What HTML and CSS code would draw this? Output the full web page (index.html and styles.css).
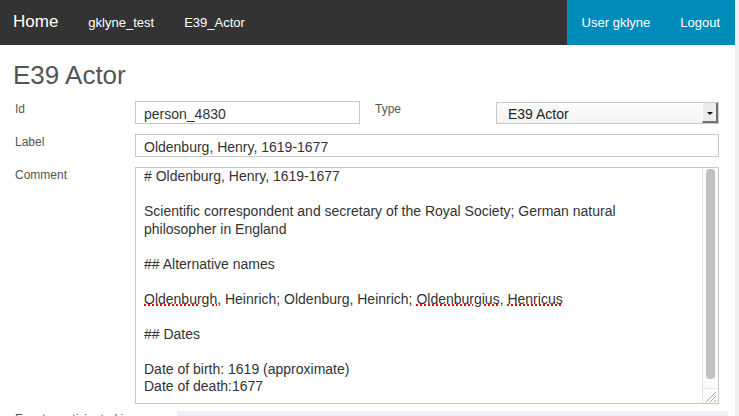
FILE: index.html
```html
<!DOCTYPE html>
<html lang="en">
<head>
<meta charset="utf-8">
<title>E39 Actor</title>
<link rel="stylesheet" href="styles.css">
</head>
<body>
<div class="page">
  <nav class="topbar">
    <a class="nav-link brand" href="#">Home</a>
    <a class="nav-link" href="#">gklyne_test</a>
    <a class="nav-link" href="#">E39_Actor</a>
    <div class="nav-right">
      <a class="nav-link" href="#">User gklyne</a>
      <a class="nav-link" href="#">Logout</a>
    </div>
  </nav>
  <main class="content">
    <h1 class="title">E39 Actor</h1>
    <form class="form">
      <div class="row">
        <label class="label" for="f-id">Id</label>
        <input class="input" id="f-id" type="text" value="person_4830">
        <label class="label label-type" for="f-type">Type</label>
        <div class="select">
          <select class="select-native" id="f-type"><option>E39 Actor</option></select>
          <span class="select-btn"><span class="select-arrow"></span></span>
        </div>
      </div>
      <div class="row">
        <label class="label" for="f-label">Label</label>
        <input class="input input-wide" id="f-label" type="text" value="Oldenburg, Henry, 1619-1677">
      </div>
      <div class="row row-comment">
        <label class="label">Comment</label>
        <div class="comment">
          <div class="comment-text"># Oldenburg, Henry, 1619-1677

Scientific correspondent and secretary of the Royal Society; German natural
philosopher in England

## Alternative names

<span class="misspelt">Oldenburgh</span>, Heinrich; Oldenburg, Heinrich; <span class="misspelt">Oldenburgius</span>, <span class="misspelt">Henricus</span>

## Dates

Date of birth: 1619 (approximate)
Date of death:1677</div>
          <div class="comment-bar">
            <div class="comment-track"><div class="comment-thumb"></div></div>
            <div class="comment-resizer">
              <svg width="14" height="14" viewBox="0 0 14 14" aria-hidden="true">
                <path d="M13 3 L3 13 M13 7 L7 13 M13 11 L11 13" stroke="#a8a8a8" stroke-width="1" fill="none"/>
              </svg>
            </div>
          </div>
        </div>
      </div>
      <div class="row-group">
        <label class="label label-group">Events participated in</label>
        <div class="group-box"></div>
      </div>
    </form>
  </main>
</div>
<div class="page-scroll"></div>
</body>
</html>
```

FILE: styles.css
```css
html, body {
  margin: 0;
  height: 100%;
  overflow: hidden;
}

body {
  display: flex;
  background: #fff;
  font-family: "Liberation Sans", Arial, Helvetica, sans-serif;
  color: #333;
}

.page {
  width: 735px;
  flex: none;
}

.page-scroll {
  width: 4px;
  flex: none;
  background: #efefef;
}

/* top bar */
.topbar {
  display: flex;
  height: 45px;
  background: #333;
}

.nav-link {
  display: block;
  padding: 1px 15px 0;
  font-size: 13px;
  line-height: 44px;
  color: #fff;
  text-decoration: none;
}

.brand {
  padding: 0 15px 0 13px;
  font-size: 17px;
  line-height: 44px;
}

.nav-right {
  display: flex;
  margin-left: auto;
  background: #008cba;
}

/* heading */
.title {
  margin: 0 0 10px;
  padding: 15px 0 0 13px;
  font-size: 26px;
  font-weight: normal;
  line-height: 31px;
  color: #555;
}

/* form */
.form {
  padding: 0 16px 0 15px;
}

.row {
  display: grid;
  grid-template-columns: 120px 225px 15px 121px 1fr;
  align-items: start;
  margin-bottom: 10px;
}

.row-comment {
  margin-bottom: 7px;
}

.label {
  font-size: 12px;
  line-height: 17px;
  color: #555;
}

.label-type {
  grid-column: 4;
}

.input {
  box-sizing: border-box;
  height: 23px;
  margin: 0;
  padding: 2px 8px 0;
  border: 1px solid #c9c9c9;
  border-radius: 0;
  background: #fff;
  font-family: "Liberation Sans", Arial, sans-serif;
  font-size: 14px;
  color: #333;
  outline: none;
}

.input-wide {
  grid-column: 2 / -1;
}

/* select */
.select {
  display: flex;
  box-sizing: border-box;
  height: 23px;
  margin-top: 1px;
  height: 22px;
  border: 1px solid #c9c9c9;
  background: linear-gradient(#fcfcfc, #f3f3f3);
}

.select-native {
  flex: 1;
  min-width: 0;
  margin: 0;
  padding: 1px 0 0 11px;
  border: 0;
  background: transparent;
  -webkit-appearance: none;
  appearance: none;
  font-family: "Liberation Sans", Arial, sans-serif;
  font-size: 14px;
  color: #222;
  outline: none;
}

.select-btn {
  display: flex;
  align-items: center;
  justify-content: center;
  box-sizing: border-box;
  width: 16px;
  border-left: 1px solid #fafafa;
  border-right: 2px solid #707070;
  border-bottom: 2px solid #707070;
  background: #ececec;
}

.select-arrow {
  width: 0;
  height: 0;
  margin-top: 2px;
  border-left: 3px solid transparent;
  border-right: 3px solid transparent;
  border-top: 3px solid #111;
}

/* comment textarea look-alike */
.comment {
  grid-column: 2 / -1;
  display: flex;
  box-sizing: border-box;
  height: 237px;
  border: 1px solid #c9c9c9;
  background: #fff;
}

.comment-text {
  flex: 1;
  min-width: 0;
  padding: 0 8px;
  overflow: hidden;
  white-space: pre;
  font-size: 14px;
  line-height: 17.5px;
  color: #333;
}

.misspelt {
  text-decoration: underline dotted #e01010;
  text-decoration-thickness: 1.5px;
  text-underline-offset: 1px;
}

.comment-bar {
  display: flex;
  flex-direction: column;
  width: 15px;
  flex: none;
  border-left: 1px solid #e6e6e6;
  background: #fbfbfb;
}

.comment-track {
  flex: 1;
  padding: 1px 3px 0;
}

.comment-thumb {
  height: 210px;
  border-radius: 4px;
  background: #c1c1c1;
}

.comment-resizer {
  display: flex;
  box-sizing: border-box;
  height: 15px;
  border-top: 1px solid #e6e6e6;
}

/* group row */
.row-group {
  display: flex;
  align-items: flex-start;
  margin-right: -9px;
}

.label-group {
  width: 162px;
  flex: none;
}

.group-box {
  flex: 1;
  height: 80px;
  background: #efeff8;
}
```
